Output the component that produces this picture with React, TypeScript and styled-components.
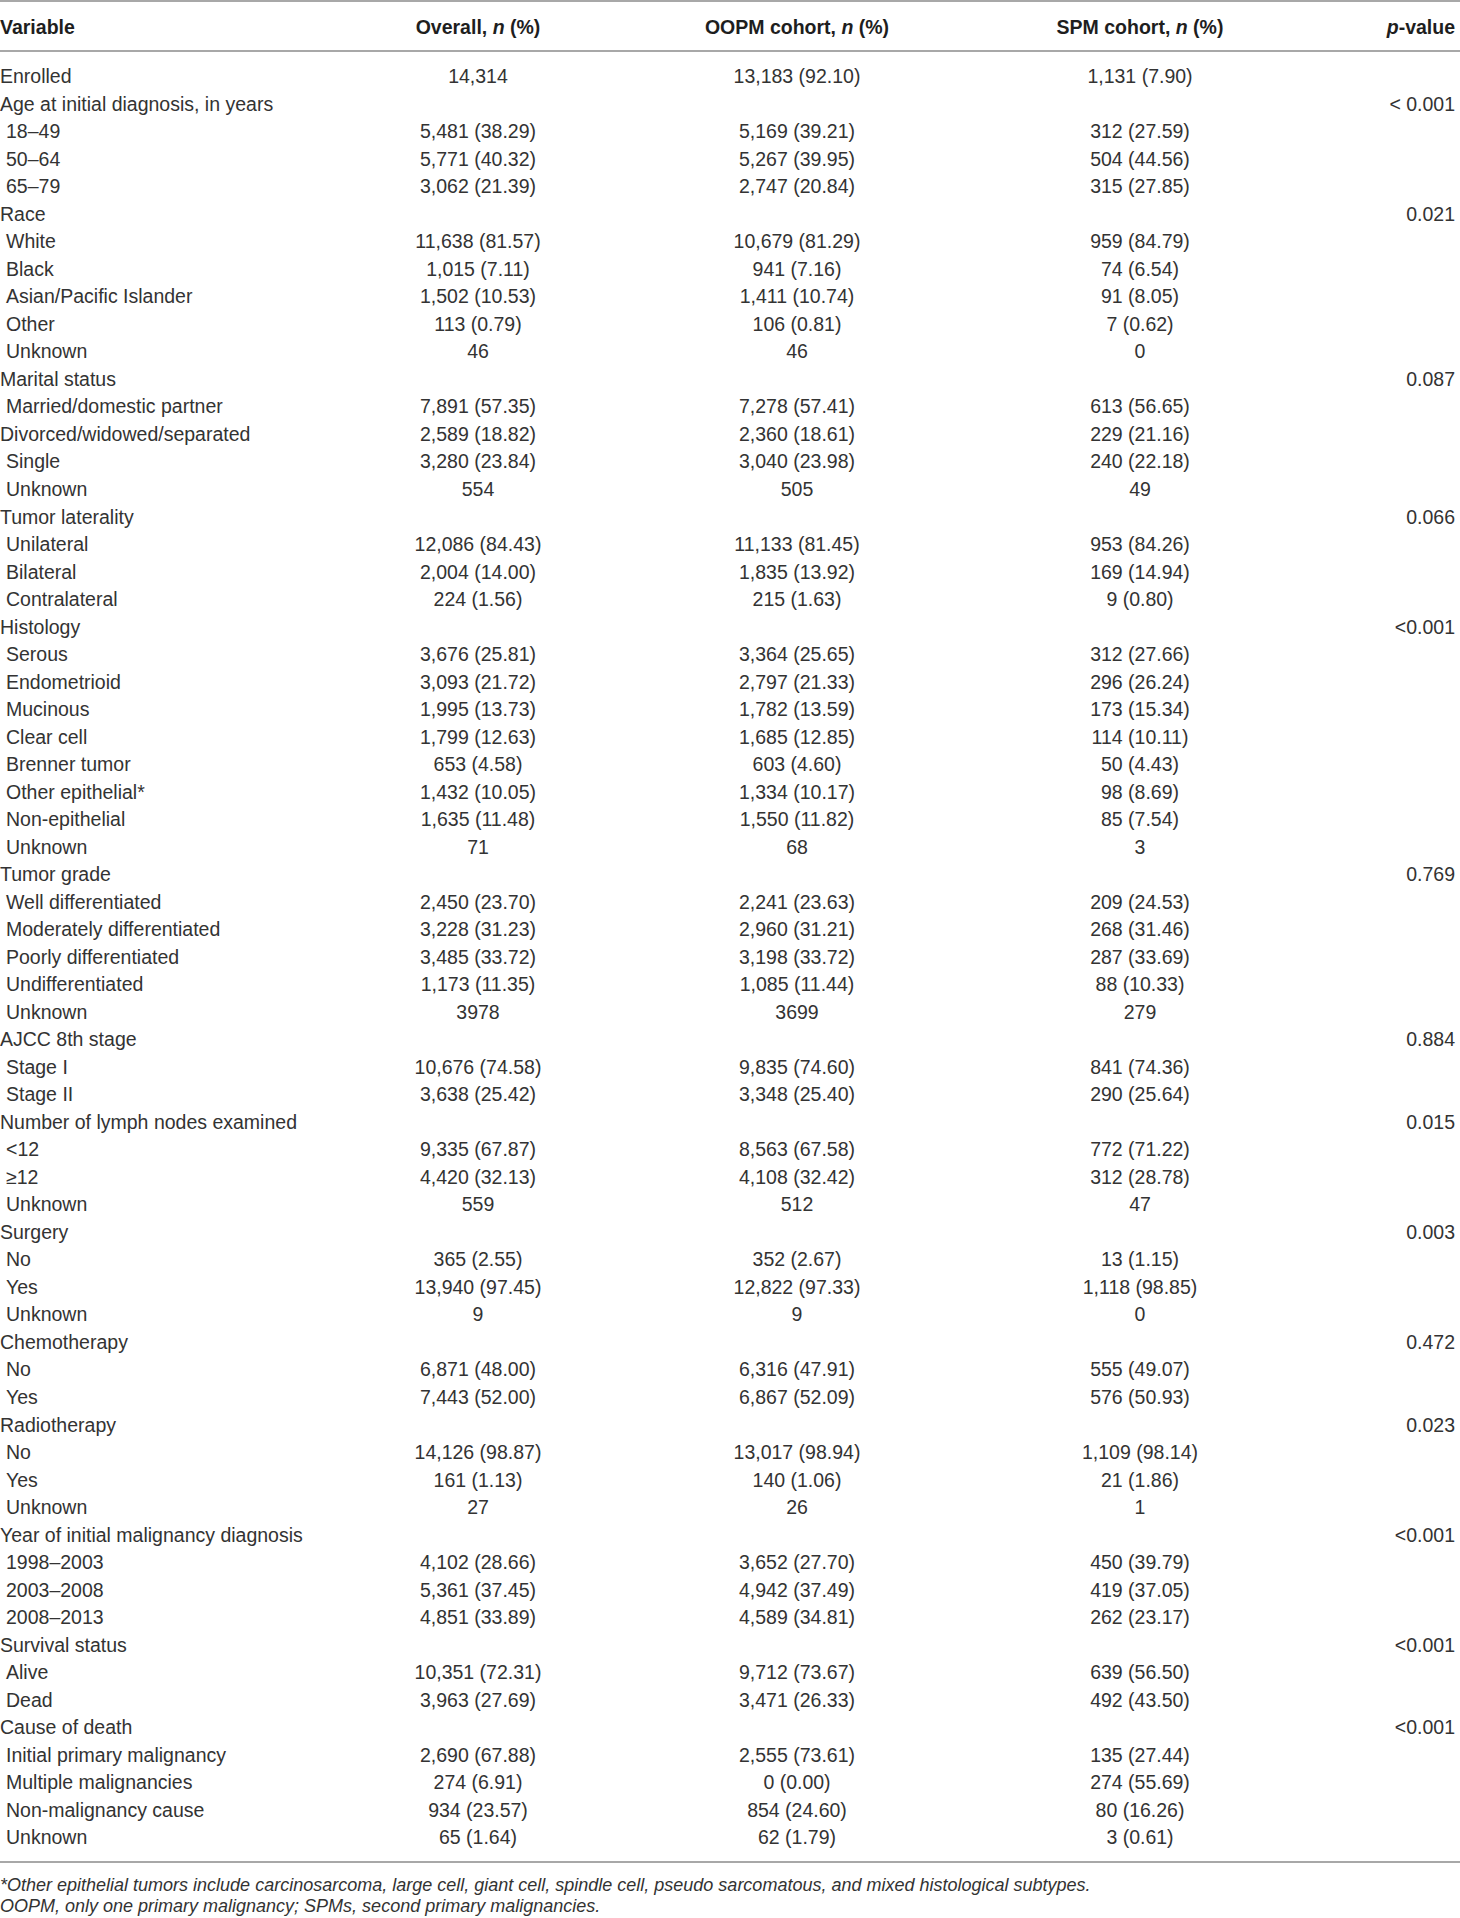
import React from 'react';
import styled, { createGlobalStyle } from 'styled-components';

type Row = {
  label: string;
  sub?: boolean;
  overall?: string;
  oopm?: string;
  spm?: string;
  p?: string;
};

const GlobalStyle = createGlobalStyle`
  html, body {
    margin: 0;
    padding: 0;
    background: #ffffff;
  }
  body {
    font-family: 'Liberation Sans', Arial, sans-serif;
    color: #2b2b2b;
  }
`;

const Page = styled.div`
  width: 1460px;
  background: #ffffff;
`;

const Table = styled.div`
  border-top: 2px solid #a8a8a8;
`;

const Grid = styled.div`
  display: grid;
  grid-template-columns: 340px 276px 362px 324px 1fr;
  padding-right: 5px;
  align-items: center;
`;

const HeaderRow = styled(Grid)`
  height: 48px;
  border-bottom: 2px solid #a8a8a8;
`;

const Th = styled.div<{ $align?: 'left' | 'center' | 'right' }>`
  font-size: 19.5px;
  font-weight: bold;
  color: #1e1e1e;
  text-align: ${(p) => p.$align || 'center'};
  white-space: nowrap;
  padding-top: 2px;

  i {
    font-style: italic;
  }
`;

const Body = styled.div`
  padding: 11px 0 9px;
  border-bottom: 2px solid #a8a8a8;
`;

const BodyRow = styled(Grid)`
  height: 27.53px;
`;

const Td = styled.div<{ $align?: 'left' | 'center' | 'right'; $sub?: boolean }>`
  font-size: 19.5px;
  color: #333333;
  white-space: nowrap;
  text-align: ${(p) => p.$align || 'center'};
  padding-left: ${(p) => (p.$sub ? '6px' : '0')};
`;

const Notes = styled.div`
  padding-top: 12px;
`;

const Note = styled.div`
  font-size: 18px;
  font-style: italic;
  color: #333333;
  line-height: 21px;
  white-space: nowrap;
`;

const rows: Row[] = [
  { label: 'Enrolled', overall: '14,314', oopm: '13,183 (92.10)', spm: '1,131 (7.90)' },
  { label: 'Age at initial diagnosis, in years', p: '< 0.001' },
  { label: '18–49', sub: true, overall: '5,481 (38.29)', oopm: '5,169 (39.21)', spm: '312 (27.59)' },
  { label: '50–64', sub: true, overall: '5,771 (40.32)', oopm: '5,267 (39.95)', spm: '504 (44.56)' },
  { label: '65–79', sub: true, overall: '3,062 (21.39)', oopm: '2,747 (20.84)', spm: '315 (27.85)' },
  { label: 'Race', p: '0.021' },
  { label: 'White', sub: true, overall: '11,638 (81.57)', oopm: '10,679 (81.29)', spm: '959 (84.79)' },
  { label: 'Black', sub: true, overall: '1,015 (7.11)', oopm: '941 (7.16)', spm: '74 (6.54)' },
  { label: 'Asian/Pacific Islander', sub: true, overall: '1,502 (10.53)', oopm: '1,411 (10.74)', spm: '91 (8.05)' },
  { label: 'Other', sub: true, overall: '113 (0.79)', oopm: '106 (0.81)', spm: '7 (0.62)' },
  { label: 'Unknown', sub: true, overall: '46', oopm: '46', spm: '0' },
  { label: 'Marital status', p: '0.087' },
  { label: 'Married/domestic partner', sub: true, overall: '7,891 (57.35)', oopm: '7,278 (57.41)', spm: '613 (56.65)' },
  { label: 'Divorced/widowed/separated', overall: '2,589 (18.82)', oopm: '2,360 (18.61)', spm: '229 (21.16)' },
  { label: 'Single', sub: true, overall: '3,280 (23.84)', oopm: '3,040 (23.98)', spm: '240 (22.18)' },
  { label: 'Unknown', sub: true, overall: '554', oopm: '505', spm: '49' },
  { label: 'Tumor laterality', p: '0.066' },
  { label: 'Unilateral', sub: true, overall: '12,086 (84.43)', oopm: '11,133 (81.45)', spm: '953 (84.26)' },
  { label: 'Bilateral', sub: true, overall: '2,004 (14.00)', oopm: '1,835 (13.92)', spm: '169 (14.94)' },
  { label: 'Contralateral', sub: true, overall: '224 (1.56)', oopm: '215 (1.63)', spm: '9 (0.80)' },
  { label: 'Histology', p: '<0.001' },
  { label: 'Serous', sub: true, overall: '3,676 (25.81)', oopm: '3,364 (25.65)', spm: '312 (27.66)' },
  { label: 'Endometrioid', sub: true, overall: '3,093 (21.72)', oopm: '2,797 (21.33)', spm: '296 (26.24)' },
  { label: 'Mucinous', sub: true, overall: '1,995 (13.73)', oopm: '1,782 (13.59)', spm: '173 (15.34)' },
  { label: 'Clear cell', sub: true, overall: '1,799 (12.63)', oopm: '1,685 (12.85)', spm: '114 (10.11)' },
  { label: 'Brenner tumor', sub: true, overall: '653 (4.58)', oopm: '603 (4.60)', spm: '50 (4.43)' },
  { label: 'Other epithelial*', sub: true, overall: '1,432 (10.05)', oopm: '1,334 (10.17)', spm: '98 (8.69)' },
  { label: 'Non-epithelial', sub: true, overall: '1,635 (11.48)', oopm: '1,550 (11.82)', spm: '85 (7.54)' },
  { label: 'Unknown', sub: true, overall: '71', oopm: '68', spm: '3' },
  { label: 'Tumor grade', p: '0.769' },
  { label: 'Well differentiated', sub: true, overall: '2,450 (23.70)', oopm: '2,241 (23.63)', spm: '209 (24.53)' },
  { label: 'Moderately differentiated', sub: true, overall: '3,228 (31.23)', oopm: '2,960 (31.21)', spm: '268 (31.46)' },
  { label: 'Poorly differentiated', sub: true, overall: '3,485 (33.72)', oopm: '3,198 (33.72)', spm: '287 (33.69)' },
  { label: 'Undifferentiated', sub: true, overall: '1,173 (11.35)', oopm: '1,085 (11.44)', spm: '88 (10.33)' },
  { label: 'Unknown', sub: true, overall: '3978', oopm: '3699', spm: '279' },
  { label: 'AJCC 8th stage', p: '0.884' },
  { label: 'Stage I', sub: true, overall: '10,676 (74.58)', oopm: '9,835 (74.60)', spm: '841 (74.36)' },
  { label: 'Stage II', sub: true, overall: '3,638 (25.42)', oopm: '3,348 (25.40)', spm: '290 (25.64)' },
  { label: 'Number of lymph nodes examined', p: '0.015' },
  { label: '<12', sub: true, overall: '9,335 (67.87)', oopm: '8,563 (67.58)', spm: '772 (71.22)' },
  { label: '≥12', sub: true, overall: '4,420 (32.13)', oopm: '4,108 (32.42)', spm: '312 (28.78)' },
  { label: 'Unknown', sub: true, overall: '559', oopm: '512', spm: '47' },
  { label: 'Surgery', p: '0.003' },
  { label: 'No', sub: true, overall: '365 (2.55)', oopm: '352 (2.67)', spm: '13 (1.15)' },
  { label: 'Yes', sub: true, overall: '13,940 (97.45)', oopm: '12,822 (97.33)', spm: '1,118 (98.85)' },
  { label: 'Unknown', sub: true, overall: '9', oopm: '9', spm: '0' },
  { label: 'Chemotherapy', p: '0.472' },
  { label: 'No', sub: true, overall: '6,871 (48.00)', oopm: '6,316 (47.91)', spm: '555 (49.07)' },
  { label: 'Yes', sub: true, overall: '7,443 (52.00)', oopm: '6,867 (52.09)', spm: '576 (50.93)' },
  { label: 'Radiotherapy', p: '0.023' },
  { label: 'No', sub: true, overall: '14,126 (98.87)', oopm: '13,017 (98.94)', spm: '1,109 (98.14)' },
  { label: 'Yes', sub: true, overall: '161 (1.13)', oopm: '140 (1.06)', spm: '21 (1.86)' },
  { label: 'Unknown', sub: true, overall: '27', oopm: '26', spm: '1' },
  { label: 'Year of initial malignancy diagnosis', p: '<0.001' },
  { label: '1998–2003', sub: true, overall: '4,102 (28.66)', oopm: '3,652 (27.70)', spm: '450 (39.79)' },
  { label: '2003–2008', sub: true, overall: '5,361 (37.45)', oopm: '4,942 (37.49)', spm: '419 (37.05)' },
  { label: '2008–2013', sub: true, overall: '4,851 (33.89)', oopm: '4,589 (34.81)', spm: '262 (23.17)' },
  { label: 'Survival status', p: '<0.001' },
  { label: 'Alive', sub: true, overall: '10,351 (72.31)', oopm: '9,712 (73.67)', spm: '639 (56.50)' },
  { label: 'Dead', sub: true, overall: '3,963 (27.69)', oopm: '3,471 (26.33)', spm: '492 (43.50)' },
  { label: 'Cause of death', p: '<0.001' },
  { label: 'Initial primary malignancy', sub: true, overall: '2,690 (67.88)', oopm: '2,555 (73.61)', spm: '135 (27.44)' },
  { label: 'Multiple malignancies', sub: true, overall: '274 (6.91)', oopm: '0 (0.00)', spm: '274 (55.69)' },
  { label: 'Non-malignancy cause', sub: true, overall: '934 (23.57)', oopm: '854 (24.60)', spm: '80 (16.26)' },
  { label: 'Unknown', sub: true, overall: '65 (1.64)', oopm: '62 (1.79)', spm: '3 (0.61)' },
];

export default function App() {
  return (
    <Page>
      <GlobalStyle />
      <Table>
        <HeaderRow>
          <Th $align="left">Variable</Th>
          <Th>Overall, <i>n</i> (%)</Th>
          <Th>OOPM cohort, <i>n</i> (%)</Th>
          <Th>SPM cohort, <i>n</i> (%)</Th>
          <Th $align="right"><i>p</i>-value</Th>
        </HeaderRow>
        <Body>
          {rows.map((row, index) => (
            <BodyRow key={index}>
              <Td $align="left" $sub={row.sub}>{row.label}</Td>
              <Td>{row.overall}</Td>
              <Td>{row.oopm}</Td>
              <Td>{row.spm}</Td>
              <Td $align="right">{row.p}</Td>
            </BodyRow>
          ))}
        </Body>
      </Table>
      <Notes>
        <Note>*Other epithelial tumors include carcinosarcoma, large cell, giant cell, spindle cell, pseudo sarcomatous, and mixed histological subtypes.</Note>
        <Note>OOPM, only one primary malignancy; SPMs, second primary malignancies.</Note>
      </Notes>
    </Page>
  );
}
